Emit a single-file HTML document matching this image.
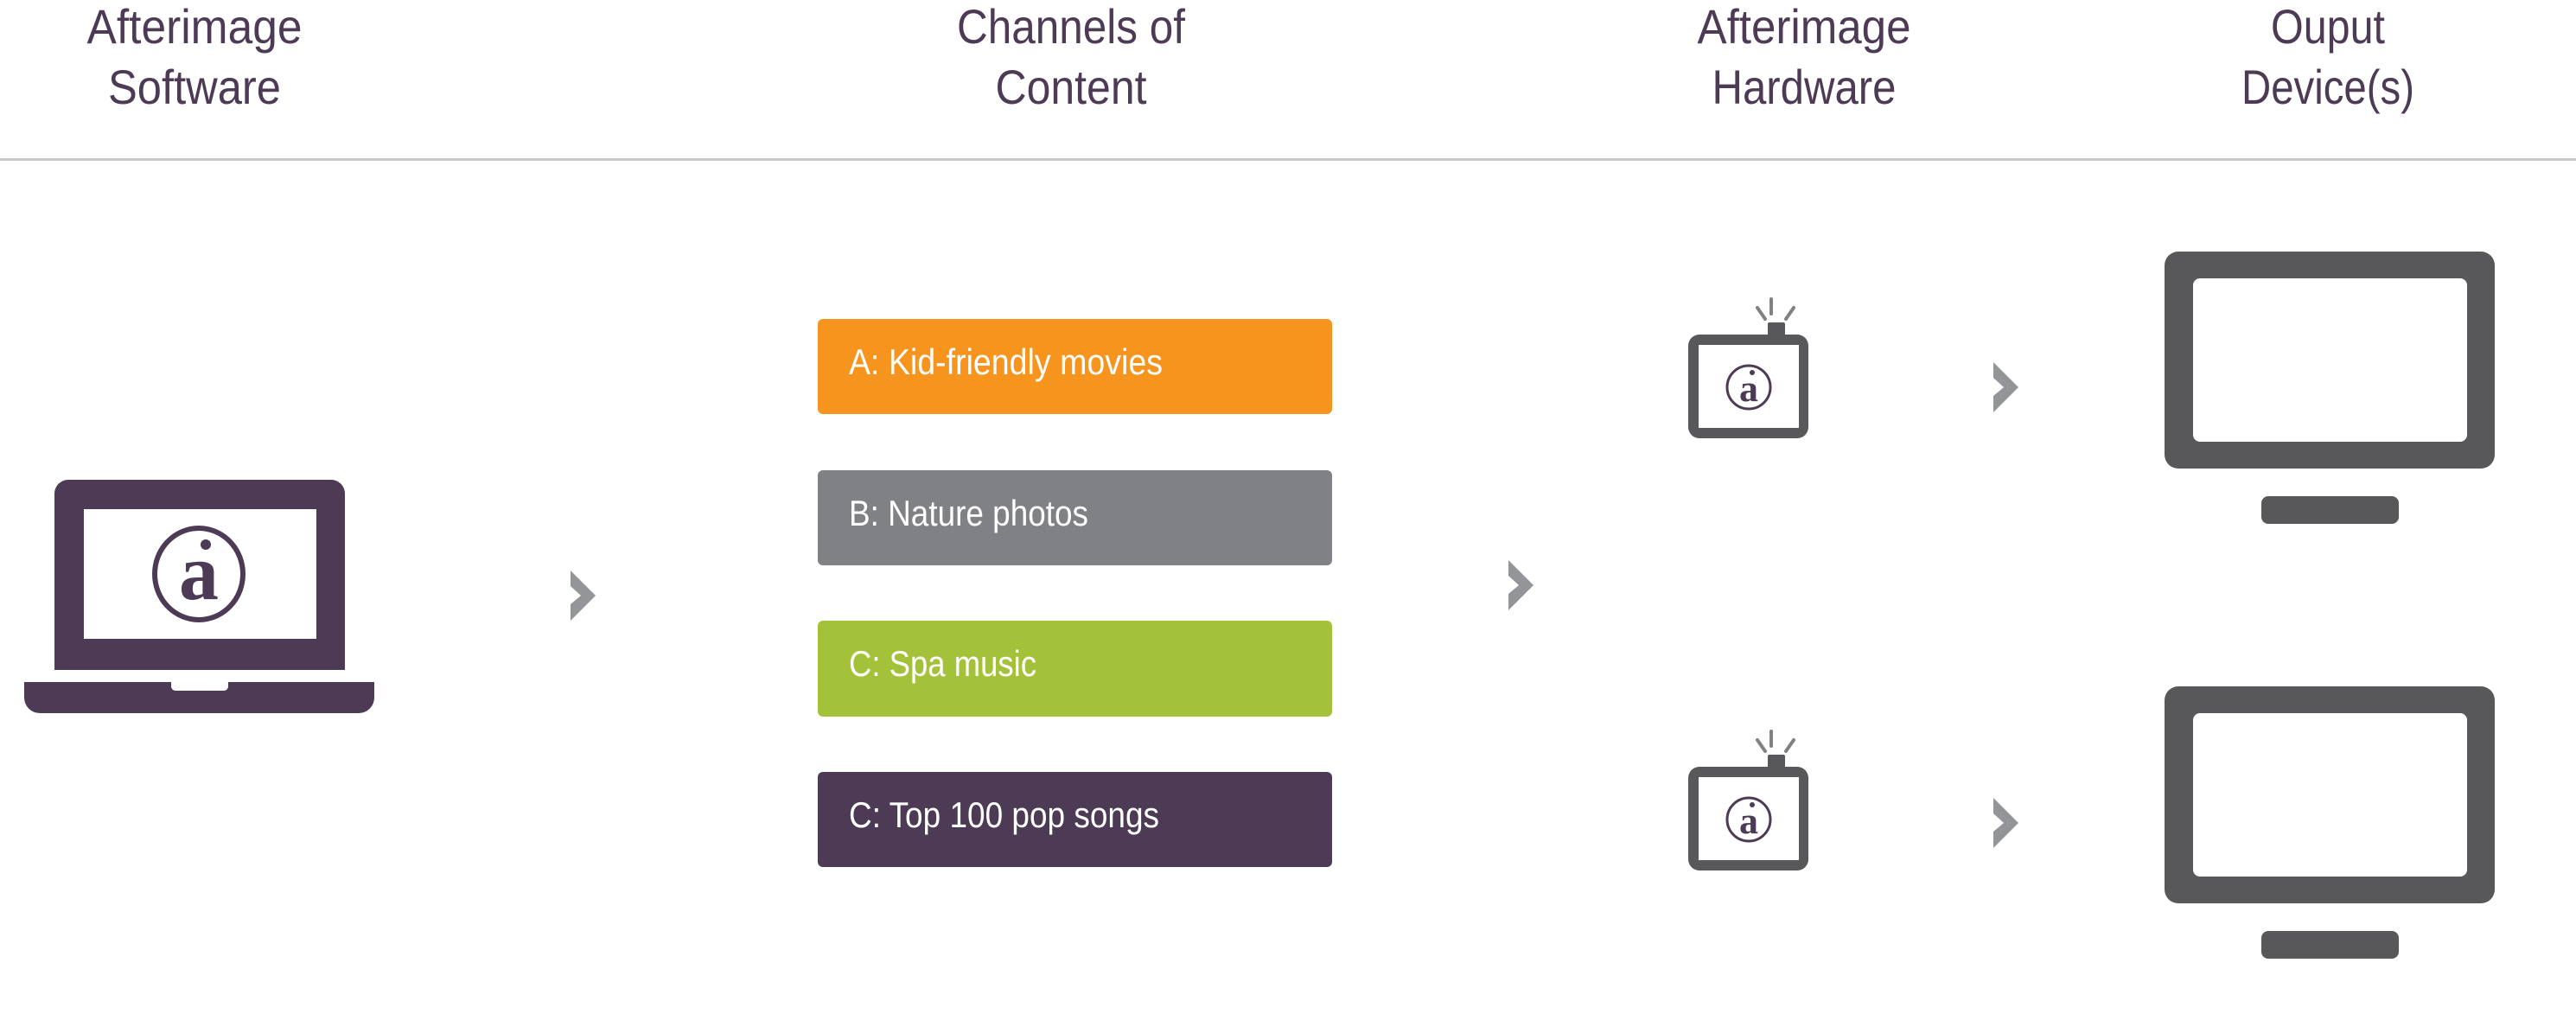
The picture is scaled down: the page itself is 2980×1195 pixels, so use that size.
<!DOCTYPE html>
<html><head><meta charset="utf-8"><style>
html,body{margin:0;padding:0;background:#fff;width:2980px;height:1195px;overflow:hidden}
svg{display:block}
.h{font-family:"Liberation Sans Narrow","Liberation Sans",sans-serif;font-size:56px;fill:#4d3b55;text-anchor:middle}
.b{font-family:"Liberation Sans Narrow","Liberation Sans",sans-serif;font-size:42px;fill:#fff}
</style></head><body>
<svg width="2980" height="1195" viewBox="0 0 2980 1195" xmlns="http://www.w3.org/2000/svg">
<defs>
<g id="dev">
 <path d="M2049 346v17" stroke="#808184" stroke-width="4" stroke-linecap="round"/>
 <path d="M2033 356l9 13M2075 356l-9 13" stroke="#808184" stroke-width="4" stroke-linecap="round"/>
 <rect x="2045" y="373" width="20" height="18" rx="2" fill="#58585a"/>
 <rect x="1953" y="387" width="139" height="120" rx="13" fill="#58585a"/>
 <rect x="1965" y="399" width="116" height="96" fill="#fff"/>
 <circle cx="2023" cy="448" r="25" fill="none" stroke="#4d3b55" stroke-width="3"/>
 <text x="2023" y="464" font-family="Liberation Serif,serif" font-weight="bold" font-size="44" fill="#4d3b55" text-anchor="middle">a</text>
 <circle cx="2027" cy="431" r="3" fill="#4d3b55"/>
</g>
<g id="mon">
 <rect x="2504" y="291" width="382" height="251" rx="16" fill="#58585a"/>
 <rect x="2537" y="322" width="317" height="189" rx="8" fill="#fff"/>
 <rect x="2616" y="574" width="159" height="32" rx="8" fill="#58585a"/>
</g>
<polygon id="chev" points="0,0 29,29 0,58 0,39 12,29 0,18" fill="#939598"/>
</defs>

<text class="h" x="225" y="50" textLength="249" lengthAdjust="spacingAndGlyphs">Afterimage</text>
<text class="h" x="225" y="120" textLength="200" lengthAdjust="spacingAndGlyphs">Software</text>
<text class="h" x="1239" y="50" textLength="264" lengthAdjust="spacingAndGlyphs">Channels of</text>
<text class="h" x="1239" y="120" textLength="175" lengthAdjust="spacingAndGlyphs">Content</text>
<text class="h" x="2087" y="50" textLength="247" lengthAdjust="spacingAndGlyphs">Afterimage</text>
<text class="h" x="2087" y="120" textLength="213" lengthAdjust="spacingAndGlyphs">Hardware</text>
<text class="h" x="2693" y="50" textLength="132" lengthAdjust="spacingAndGlyphs">Ouput</text>
<text class="h" x="2693" y="120" textLength="200" lengthAdjust="spacingAndGlyphs">Device(s)</text>
<rect x="0" y="183" width="2980" height="3" fill="#c8c8c8"/>

<!-- laptop -->
<rect x="63" y="555" width="336" height="220" rx="16" fill="#4d3b55"/>
<rect x="63" y="740" width="336" height="35" fill="#4d3b55"/>
<rect x="97" y="589" width="269" height="150" fill="#fff"/>
<path d="M28 789H433V807a18 18 0 0 1-18 18H46a18 18 0 0 1-18-18Z" fill="#4d3b55"/>
<path d="M198 789H264V794a5 5 0 0 1-5 5H203a5 5 0 0 1-5-5Z" fill="#fff"/>
<ellipse cx="230" cy="664" rx="51" ry="53" fill="none" stroke="#4d3b55" stroke-width="6"/>
<text x="230" y="693" font-family="Liberation Serif,serif" font-weight="bold" font-size="92" fill="#4d3b55" text-anchor="middle">a</text>
<circle cx="238" cy="630" r="6" fill="#4d3b55"/>

<use href="#chev" x="660" y="660"/>
<use href="#chev" x="1745" y="648"/>
<use href="#chev" x="2306" y="419"/>
<use href="#chev" x="2306" y="923"/>

<rect x="946" y="369" width="595" height="110" rx="6" fill="#f7941d"/>
<text class="b" x="982" y="433" textLength="363" lengthAdjust="spacingAndGlyphs">A: Kid-friendly movies</text>
<rect x="946" y="544" width="595" height="110" rx="6" fill="#808184"/>
<text class="b" x="982" y="608" textLength="277" lengthAdjust="spacingAndGlyphs">B: Nature photos</text>
<rect x="946" y="718" width="595" height="111" rx="6" fill="#a3c139"/>
<text class="b" x="982" y="782" textLength="217" lengthAdjust="spacingAndGlyphs">C: Spa music</text>
<rect x="946" y="893" width="595" height="110" rx="6" fill="#4d3b55"/>
<text class="b" x="982" y="957" textLength="359" lengthAdjust="spacingAndGlyphs">C: Top 100 pop songs</text>

<use href="#dev"/>
<use href="#dev" y="500"/>
<use href="#mon"/>
<use href="#mon" y="503"/>
</svg>
</body></html>
